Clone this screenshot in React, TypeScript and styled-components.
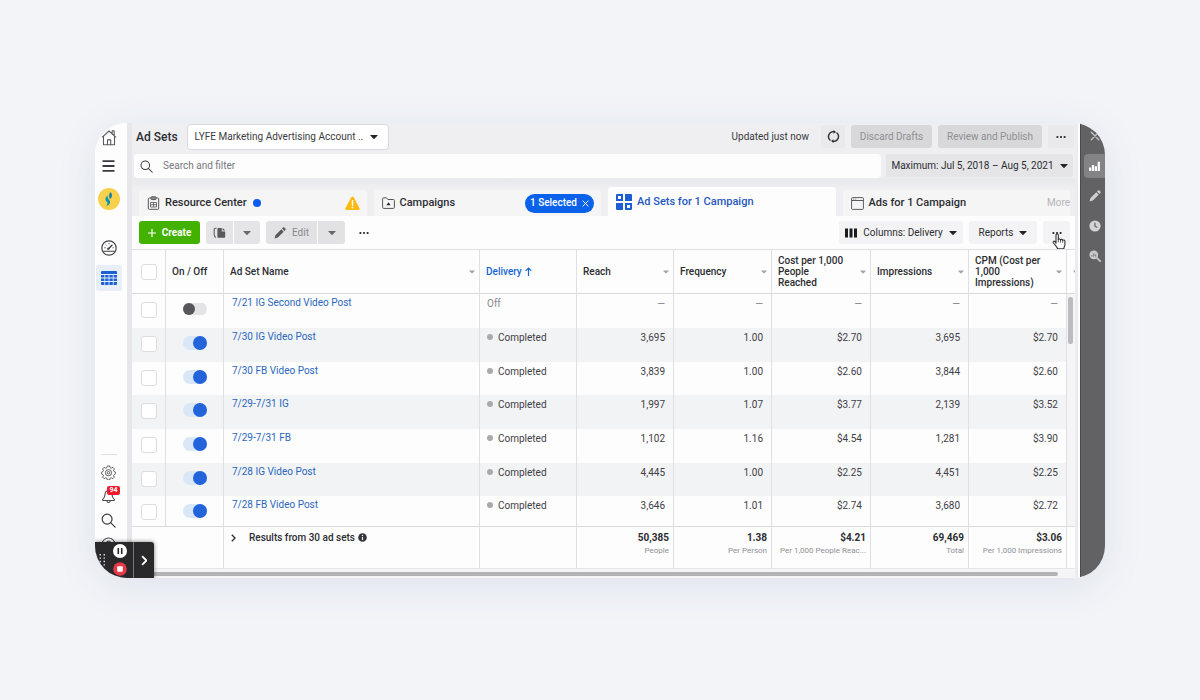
import React from 'react';
import styled, { createGlobalStyle, css } from 'styled-components';

const GlobalStyle = createGlobalStyle`
  *, *::before, *::after { box-sizing: border-box; }
  body {
    margin: 0;
    background: #f2f4f8;
    color: #2c2d31;
    font: 400 10px/12px Roboto, "Liberation Sans", sans-serif;
  }
  button, input, select { font: inherit; color: inherit; margin: 0; }
  button { border: 0; padding: 0; background: none; cursor: pointer; }
  a { text-decoration: none; color: inherit; }
`;

/* ---------- Frame ---------- */

const Page = styled.div`
  min-height: 100vh;
  padding: 123px 95px 122px;
`;

const Card = styled.div`
  position: relative;
  display: flex;
  border-radius: 32px;
  box-shadow: 0 8px 40px rgba(60, 80, 120, 0.1);
`;

const Clip = styled.div`
  display: flex;
  flex: 1;
  min-width: 0;
  position: relative;
  overflow: hidden;
  border-radius: 32px;
  background: #fdfdfe;
`;

/* ---------- Left rail ---------- */

const Rail = styled.nav`
  flex: none;
  width: 37px;
  display: flex;
  flex-direction: column;
  justify-content: space-between;
  background: #fdfdfe;
  border-right: 5px solid #e7e7eb;
`;

const RailGroup = styled.div<{ $bottom?: boolean }>`
  display: flex;
  flex-direction: column;
  align-items: center;
  padding-right: 5px;
  padding-bottom: ${(p) => (p.$bottom ? 22 : 0)}px;
`;

const RailLink = styled.a<{ $height: number; $active?: boolean }>`
  display: flex;
  align-items: center;
  justify-content: center;
  position: relative;
  width: 26px;
  height: ${(p) => p.$height}px;
  border-radius: 2px;
  background: ${(p) => (p.$active ? '#e8eff9' : 'none')};
`;

const RailGap = styled.div<{ $height: number }>`
  height: ${(p) => p.$height}px;
`;

const RailRule = styled.div`
  width: 16px;
  height: 1px;
  margin-bottom: 5px;
  background: #dedee2;
`;

const Badge = styled.span`
  position: absolute;
  top: 2px;
  right: 2px;
  padding: 0 2px;
  border-radius: 2px;
  background: #ec1c2e;
  color: #fff;
  font-size: 7px;
  font-weight: 700;
  line-height: 9px;
`;

/* ---------- Recorder widget ---------- */

const Recorder = styled.div`
  position: absolute;
  left: 0;
  bottom: 0;
  display: flex;
  width: 59px;
  height: 36px;
  border-radius: 0 3px 0 0;
  background: #29292b;
  box-shadow: 0 0 4px rgba(0, 0, 0, 0.5);
`;

const RecorderControls = styled.div`
  display: grid;
  grid-template-columns: 18px 14px;
  align-items: center;
  flex: 1;
  border-right: 1px solid #77777a;
`;

const RecorderStack = styled.div`
  display: flex;
  flex-direction: column;
  gap: 4px;
`;

const RecorderButton = styled.button`
  display: flex;
  align-items: center;
  justify-content: center;
`;

const RecorderToggle = styled(RecorderButton)`
  width: 20px;
`;

/* ---------- Main ---------- */

const Main = styled.main`
  flex: 1;
  min-width: 0;
  background: #efeef1;
`;

const TopBar = styled.header`
  display: flex;
  align-items: center;
  height: 31px;
  padding: 0 1px 4px 4px;
`;

const Title = styled.h1`
  margin: 0 9px 0 0;
  font-size: 12px;
  font-weight: 500;
  line-height: 16px;
`;

const SelectBox = styled.div`
  position: relative;
  display: flex;
  align-items: center;
`;

const AccountSelect = styled.select`
  appearance: none;
  width: 202px;
  height: 26px;
  padding: 0 20px 0 7px;
  border: 1px solid #d9d9de;
  border-radius: 4px;
  background: #fff;
  color: #3a3b40;
`;

const SelectArrow = styled.span`
  position: absolute;
  right: 11px;
  display: flex;
  pointer-events: none;
`;

const Spacer = styled.div`
  flex: 1;
`;

const Updated = styled.span`
  margin-right: 12px;
  color: #3a3b40;
`;

type Tone = 'plain' | 'faint' | 'soft' | 'grey' | 'muted' | 'disabled' | 'green';

const tones: Record<Tone, ReturnType<typeof css>> = {
  plain: css`background: none;`,
  faint: css`background: #e9e9eb;`,
  soft: css`background: #f3f3f5;`,
  grey: css`background: #e5e5e8;`,
  muted: css`background: #e2e2e4; color: #88898d;`,
  disabled: css`background: #d8d8db; color: #8f8f93;`,
  green: css`background: #43b100; color: #fff; font-weight: 700;`,
};

const Button = styled.button<{ $tone: Tone; $width?: number; $join?: 'left' | 'right' }>`
  display: flex;
  align-items: center;
  justify-content: center;
  gap: 6px;
  flex: none;
  width: ${(p) => (p.$width ? `${p.$width}px` : 'auto')};
  height: 23px;
  border-radius: ${(p) =>
    p.$join === 'left' ? '3px 0 0 3px' : p.$join === 'right' ? '0 3px 3px 0' : '3px'};
  white-space: nowrap;
  ${(p) => tones[p.$tone]}
`;

const TopActions = styled.div`
  display: flex;
  gap: 6px;
`;

const SearchRow = styled.div`
  display: flex;
  gap: 5px;
  height: 33px;
  padding: 0 2px 9px;
  background: linear-gradient(#efeef1 22px, #e8e9ec 26px, #eeeef1);
`;

const SearchBox = styled.label`
  display: flex;
  align-items: center;
  flex: 1;
  min-width: 0;
  gap: 10px;
  padding-left: 6px;
  border-radius: 4px;
  background: #fdfdfe;
`;

const SearchInput = styled.input`
  flex: 1;
  min-width: 0;
  padding: 0;
  border: 0;
  outline: 0;
  background: none;
  &::placeholder { color: #77787d; opacity: 1; }
`;

/* ---------- Tabs ---------- */

const Tabs = styled.div`
  display: grid;
  grid-template-columns: repeat(4, minmax(0, 1fr));
  gap: 7px;
  height: 29px;
  padding: 0 5px 0 7px;
  align-items: end;
`;

const Tab = styled.div<{ $active?: boolean }>`
  display: flex;
  align-items: center;
  height: ${(p) => (p.$active ? 29 : 26)}px;
  padding: 0 7px 0 8px;
  border-radius: 3px 3px 0 0;
  background: ${(p) => (p.$active ? '#fdfdfe' : '#f5f5f6')};
  color: ${(p) => (p.$active ? '#2559c0' : '#2c2d31')};
  &:last-child { padding-right: 0; }
`;

const TabLink = styled.a`
  display: flex;
  align-items: center;
  gap: 5px;
  font-size: 11px;
  font-weight: 500;
  white-space: nowrap;
`;

const Dot = styled.span`
  width: 8px;
  height: 8px;
  margin-left: 6px;
  border-radius: 50%;
  background: #0b5cf0;
`;

const Chip = styled.button`
  display: flex;
  align-items: center;
  gap: 5px;
  height: 19px;
  padding: 0 5px;
  border-radius: 10px;
  background: #0a62ea;
  color: #fff;
  font-weight: 500;
`;

const More = styled.a`
  color: #b4b4b8;
`;

/* ---------- Toolbar ---------- */

const Toolbar = styled.div`
  display: flex;
  align-items: center;
  gap: 6px;
  height: 33px;
  padding: 0 5px 0 7px;
  background: #fdfdfe;
`;

const Split = styled.div`
  display: flex;
  gap: 1px;
`;

const CursorHost = styled.div`
  position: relative;
`;

const Cursor = styled.span`
  position: absolute;
  left: 9px;
  top: 12px;
  display: flex;
`;

/* ---------- Table ---------- */

const TableWrap = styled.div`
  position: relative;
  background: #fdfdfe;
`;

const Table = styled.table`
  width: 100%;
  table-layout: fixed;
  border-spacing: 0;
  border-top: 1px solid #dfdfe3;
`;

const HeadCell = styled.th<{ $sorted?: boolean }>`
  height: 44px;
  padding: 0 4px 0 6px;
  border-right: 1px solid #e0e0e4;
  border-bottom: 1px solid #d9d9dd;
  color: ${(p) => (p.$sorted ? '#1565d8' : '#2c2d31')};
  font-weight: 500;
  line-height: 11px;
  text-align: left;
  white-space: pre;
  overflow: hidden;
  &:last-child { padding: 0 0 0 6px; border-right: 0; }
`;

const HeadInner = styled.div`
  display: flex;
  align-items: center;
  justify-content: space-between;
`;

const SortLabel = styled.div`
  display: flex;
  align-items: center;
  gap: 3px;
`;

const Row = styled.tr`
  height: 34px;
  &:nth-child(3n) { height: 33px; }
  &:last-child { height: 30px; }
  &:nth-child(even) { background: #f2f3f5; }
`;

const Cell = styled.td<{ $numeric?: boolean; $muted?: boolean }>`
  padding: 4px 8px 0 7px;
  border-right: 1px solid #e0e0e4;
  color: ${(p) => (p.$muted ? '#85868a' : '#3f4045')};
  text-align: ${(p) => (p.$numeric ? 'right' : 'left')};
  vertical-align: top;
  white-space: nowrap;
  &:last-child { border-right: 0; background: #f5f5f7; }
`;

const NameCell = styled(Cell)`
  padding: 3px 8px 0;
`;

const CheckCell = styled(Cell)`
  padding: 8px 0 0 9px;
`;

const ToggleCell = styled(Cell)`
  padding: 8px 0 0 17px;
`;

const AdLink = styled.a`
  color: #2a66bd;
`;

const StatusDot = styled.span`
  display: inline-block;
  width: 6px;
  height: 6px;
  margin: 0 5px 1px 0;
  border-radius: 50%;
  background: #a9aaae;
`;

const Check = styled.input`
  appearance: none;
  display: block;
  width: 16px;
  height: 16px;
  border: 1px solid #dcdce1;
  border-radius: 3px;
  background: #fff;
`;

const HeadCheckCell = styled(HeadCell)`
  padding: 0 0 0 9px;
`;

const Toggle = styled.input`
  appearance: none;
  display: flex;
  align-items: center;
  width: 24px;
  height: 14px;
  border-radius: 7px;
  background: linear-gradient(transparent 1px, #e4e4e7 1px, #e4e4e7 13px, transparent 13px);
  &::before {
    content: "";
    width: 12px;
    height: 12px;
    border-radius: 50%;
    background: #56575b;
  }
  &:checked {
    background: #d8e8f6;
    justify-content: flex-end;
  }
  &:checked::before {
    width: 14px;
    height: 14px;
    background: #2464da;
  }
`;

const FootCell = styled.td`
  height: 43px;
  padding: 4px 4px 0 6px;
  border-top: 1px solid #d9d9dd;
  border-right: 1px solid #e0e0e4;
  border-bottom: 1px solid #e6e6ea;
  line-height: 13px;
  text-align: right;
  vertical-align: top;
  &:first-child, &:last-child { border-right: 0; }
`;

const FootButton = styled.button`
  display: flex;
  align-items: center;
  font-weight: 500;
  line-height: 13px;
`;

const Chevron = styled.span`
  display: flex;
  width: 19px;
  padding-left: 1px;
`;

const InfoMark = styled.span`
  display: flex;
  margin-left: 3px;
`;

const Total = styled.div`
  font-weight: 700;
`;

const Caption = styled.div`
  color: #8f9094;
  font-size: 8px;
  white-space: nowrap;
`;

const VerticalThumb = styled.div`
  position: absolute;
  top: 48px;
  right: 2px;
  width: 5px;
  height: 47px;
  border-radius: 2px;
  background: #bcbcc0;
`;

const HorizontalTrack = styled.div`
  height: 9px;
  padding: 3px 17px 0 0;
  background: #f5f5f7;
`;

const HorizontalThumb = styled.div`
  height: 4px;
  border-radius: 2px;
  background: #b3b3b6;
`;

/* ---------- Right panel ---------- */

const Edge = styled.div`
  flex: none;
  width: 5px;
  background: #ececef;
  border-right: 2px solid #fdfdfe;
`;

const SidePanel = styled.aside`
  flex: none;
  display: flex;
  flex-direction: column;
  gap: 6px;
  width: 25px;
  padding: 1px 0 0 3px;
  border-left: 1px solid #4a494c;
  background: #626164;
`;

const SideButton = styled.button<{ $active?: boolean }>`
  display: flex;
  align-items: center;
  justify-content: center;
  height: 24px;
  border-radius: 4px 0 0 4px;
  background: ${(p) => (p.$active ? '#838285' : 'none')};
`;

/* ---------- Icons ---------- */

const Arrow = ({ size = 8, color = '#222326' }: { size?: number; color?: string }) => (
  <svg width={size} height={size} viewBox="0 0 8 8" aria-hidden="true">
    <path d="M.6 2h6.8q.6 0 .2.5L4.5 5.8q-.5.5-1 0L.4 2.5Q0 2 .6 2Z" fill={color} />
  </svg>
);

const SortArrow = () => (
  <svg width="7" height="9" viewBox="0 0 7 9" fill="none" stroke="#1565d8" strokeWidth="1.2" aria-hidden="true">
    <path d="M3.500 9V1.200M.7 3.900l2.800-2.800 2.800 2.800" />
  </svg>
);

const Dots = () => (
  <svg width="10" height="4" viewBox="0 0 10 4" aria-hidden="true">
    <circle cx="1.4" cy="2" r="1.1" fill="#222326" />
    <circle cx="5" cy="2" r="1.1" fill="#222326" />
    <circle cx="8.6" cy="2" r="1.1" fill="#222326" />
  </svg>
);

const Magnifier = ({ size, color = '#3a3b40' }: { size: number; color?: string }) => (
  <svg width={size} height={size} viewBox="0 0 14 14" fill="none" stroke={color} strokeWidth="1.1" strokeLinecap="round" aria-hidden="true">
    <circle cx="5.7" cy="5.7" r="4.6" />
    <path d="m9.2 9.2 4 4" />
  </svg>
);

const HomeIcon = () => (
  <svg width="16" height="17" viewBox="0 0 16 17" fill="none" stroke="#5a5b5f" strokeWidth="1.1" strokeLinejoin="round" aria-hidden="true">
    <path d="M1 8.400 8 2l7 6.400M2.500 7.200v8.600h11V7.200M6.500 15.600v-4.700h3.200v4.700M11.200 4.800V1.700h2v5" />
  </svg>
);

const MenuIcon = () => (
  <svg width="13" height="12" viewBox="0 0 13 12" stroke="#3a3b40" strokeWidth="1.8" aria-hidden="true">
    <path d="M.5 1.2h12M.5 6h12M.5 10.8h12" />
  </svg>
);

const AvatarIcon = () => (
  <svg width="22" height="22" viewBox="0 0 22 22" aria-hidden="true">
    <circle cx="11" cy="11" r="11" fill="#f8d04c" />
    <path d="M12.4 4c2.400 2.400 1.800 5-.4 7.200-1.200-1.800-1.400-4.400.4-7.200Z" fill="#0a7fa6" />
    <path d="M9.500 7.200c-2.600 2.800-2.600 5.200-.3 6.800.6 1.400 0 2.600-1 3.800 3-.6 5-3 3.400-5.400C10.300 10.800 9.300 9.400 9.500 7.200Z" fill="#0b93b8" />
  </svg>
);

const GaugeIcon = () => (
  <svg width="16" height="16" viewBox="0 0 16 16" fill="none" stroke="#3f4045" strokeLinecap="round" aria-hidden="true">
    <circle cx="8" cy="8" r="7.200" strokeWidth="1.200" />
    <path d="M2.500 11.300h11" strokeWidth="1.100" />
    <path d="m7.400 8.700 3.600-3.500" strokeWidth="1.500" />
    <path d="M3.600 7.800h.6M5 4.800l.3.300M8 3.400v.4M12 7.800h.4" strokeWidth=".9" />
    <circle cx="7.200" cy="8.800" r=".8" strokeWidth=".9" />
  </svg>
);

const GridTableIcon = () => (
  <svg width="16" height="14" viewBox="0 0 16 14" fill="#1c62d6" aria-hidden="true">
    <path d="M1 0h14q1 0 1 1v2H0V1Q0 0 1 0ZM0 4h3.400v2.600H0ZM4.200 4h3.400v2.600H4.200ZM8.400 4h3.400v2.600H8.400ZM12.600 4H16v2.600h-3.400ZM0 7.500h3.400v2.600H0ZM4.200 7.500h3.400v2.600H4.200ZM8.400 7.500h3.400v2.600H8.400ZM12.600 7.500H16v2.600h-3.400ZM0 11h3.400v3H1q-1 0-1-1ZM4.200 11h3.400v3H4.200ZM8.400 11h3.400v3H8.400ZM12.600 11H16v2q0 1-1 1h-2.400Z" />
  </svg>
);

const GearIcon = () => (
  <svg width="15" height="15" viewBox="0 0 16 16" fill="none" stroke="#55565a" strokeWidth="1" strokeLinejoin="round" aria-hidden="true">
    <path d="M6.800 1h2.400l.5 1.800 1.300.6 1.700-.9 1.600 1.700-.9 1.700.6 1.200 1.600.6v1.600l-1.600.8-.6 1.300.9 1.500-1.600 1.600-1.700-.8-1.300.5-.5 1.800H6.800l-.5-1.800-1.300-.5-1.700.8-1.600-1.600.9-1.500L2 10.100l-1.600-.8V7.700L2 7.100l.6-1.200-.9-1.700 1.600-1.700 1.700.9 1.300-.6Z" />
    <circle cx="8" cy="8.200" r="3.300" />
    <circle cx="8" cy="8.200" r="1.300" />
  </svg>
);

const BellIcon = () => (
  <svg width="15" height="15" viewBox="0 0 15 15" fill="none" stroke="#4b4c50" strokeWidth="1.100" strokeLinejoin="round" aria-hidden="true">
    <path d="M7.500 1.800c-2.300 0-3.400 1.600-3.500 3.800-.1 2.600-.8 3.500-2.200 4.700-.6.600-.4 1.200.4 1.200h10.600c.8 0 1-.6.400-1.200C11.800 9.100 11.100 8.200 11 5.600c-.1-2.200-1.200-3.800-3.500-3.800ZM5.800 11.700c.1 2.300 3.300 2.300 3.400 0" />
  </svg>
);

const HelpIcon = () => (
  <svg width="15" height="15" viewBox="0 0 15 15" fill="none" stroke="#55565a" strokeWidth="1.100" aria-hidden="true">
    <circle cx="7.500" cy="7.500" r="6.500" />
    <path d="M5.600 5.800c.2-2.300 3.800-2.200 3.800 0 0 1.300-1.900 1.500-1.900 3" />
  </svg>
);

const RefreshIcon = () => (
  <svg width="13" height="13" viewBox="0 0 13 13" fill="none" stroke="#303135" strokeWidth="1.400" aria-hidden="true">
    <path d="M3.500 10.500A4.900 4.900 0 0 1 7 1.700M9.500 2.500A4.900 4.900 0 0 1 6 11.300" />
    <path d="M6.400 0 9 1.900 6.600 3.800ZM6.600 13 4 11.100l2.400-1.900Z" fill="#303135" stroke="none" />
  </svg>
);

const ClipboardIcon = () => (
  <svg width="13" height="14" viewBox="0 0 13 14" fill="none" stroke="#55565a" strokeWidth="1" aria-hidden="true">
    <path d="M4 2H2.300q-1 0-1 1v9.300q0 1 1 1h8.400q1 0 1-1V3q0-1-1-1H9" />
    <rect x="4" y=".8" width="5" height="2.800" rx=".8" fill="#8d8e92" />
    <path d="M3.500 6.500h6v4.500h-6ZM3.500 8.700h6M6.500 6.500V11" strokeWidth=".8" />
  </svg>
);

const WarningIcon = () => (
  <svg width="15" height="15" viewBox="0 0 15 15" aria-hidden="true">
    <path d="M6.300 1.200q1.200-1.600 2.400 0l5.900 11q.7 1.800-1.200 1.800H1.600q-1.900 0-1.200-1.800Z" fill="#fdb913" />
    <path d="M7.500 4.800v4.400" stroke="#fff" strokeWidth="1.500" strokeLinecap="round" />
    <circle cx="7.500" cy="11.600" r=".9" fill="#fff" />
  </svg>
);

const FolderIcon = () => (
  <svg width="13" height="12" viewBox="0 0 13 12" fill="none" stroke="#55565a" strokeWidth="1" strokeLinejoin="round" aria-hidden="true">
    <path d="M.6 10.400V1.600Q.6.800 1.400.8h3l1.400 1.700h5.600q1 0 1 1v6.900q0 1-1 1H1.600q-1 0-1-1Z" />
    <path d="m6.500 5.300 2 3h-4Z" fill="#222326" stroke="none" />
  </svg>
);

const AdSetsIcon = () => (
  <svg width="16" height="16" viewBox="0 0 16 16" fill="#1c5fd4" aria-hidden="true">
    <path fillRule="evenodd" d="M1 0h6v7H0V1q0-1 1-1Zm1 2v3h3V2ZM9 9h7v6q0 1-1 1H9Zm2 2v3h3v-3Z" />
    <path d="M9 0h6q1 0 1 1v6H9ZM0 9h7v7H1q-1 0-1-1Z" />
  </svg>
);

const WindowIcon = () => (
  <svg width="13" height="13" viewBox="0 0 13 13" fill="none" stroke="#5c5d61" strokeWidth="1" aria-hidden="true">
    <rect x=".6" y=".6" width="11.800" height="11.800" rx="1" />
    <path d="M.6 3.500h11.800" />
    <path d="M2 2.100h1M4.200 2.100h1" strokeWidth=".8" />
  </svg>
);

const CloseIcon = ({ size, color }: { size: number; color: string }) => (
  <svg width={size} height={size} viewBox="0 0 8 8" stroke={color} strokeWidth="1.100" strokeLinecap="round" aria-hidden="true">
    <path d="m1 1 6 6M7 1 1 7" />
  </svg>
);

const PlusIcon = () => (
  <svg width="8" height="8" viewBox="0 0 8 8" stroke="#fff" strokeWidth="1.200" aria-hidden="true">
    <path d="M4 0v8M0 4h8" />
  </svg>
);

const DuplicateIcon = () => (
  <svg width="13" height="12" viewBox="0 0 13 12" aria-hidden="true">
    <path d="M3.600 1Q1.200 1 1.200 3v4.500q0 2 1.800 3" fill="none" stroke="#6b6c70" strokeWidth="1.200" />
    <path d="M5.400 1h3.400v3.400h3.400v5.400q0 1-1 1H5.400q-1 0-1-1V2q0-1 1-1Z" fill="#58595d" />
    <path d="m9.600.9 2.700 2.700H9.600Z" fill="#58595d" />
  </svg>
);

const PencilIcon = ({ color }: { color: string }) => (
  <svg width="12" height="12" viewBox="0 0 12 12" fill={color} aria-hidden="true">
    <path d="m.6 11.400.8-3.200L7.300 2.300l2.400 2.400-5.900 5.900ZM8 1.600 9 .6q.7-.6 1.400 0l1 1q.6.700 0 1.400l-1 1Z" />
  </svg>
);

const ColumnsIcon = () => (
  <svg width="12" height="10" viewBox="0 0 12 10" fill="#1b1c1f" aria-hidden="true">
    <path d="M0 .5h3v9H0ZM4.500.5h3v9h-3ZM9 .5h3v9H9Z" />
  </svg>
);

const HandIcon = () => (
  <svg width="15" height="17" viewBox="0 0 15 17" fill="#fff" stroke="#333437" strokeWidth="1.100" strokeLinejoin="round" aria-hidden="true">
    <path d="M4 10.200V2.100c0-1.700 2.300-1.700 2.300 0v4.500c.3-1 2.100-.9 2.200.3.500-.9 2.100-.6 2.200.5.600-.8 2.100-.5 2.200.8v3.600c0 1.500-.9 2-1.100 4.100H5.600C5.200 13.600 2.700 11.900 1.300 9.800c-.7-1.300.7-2.200 1.700-1.100Z" />
    <path d="M6.300 6.600v2.800M8.500 7v2.600M10.700 7.500v2.300" fill="none" strokeWidth=".8" />
  </svg>
);

const InfoIcon = () => (
  <svg width="9" height="9" viewBox="0 0 9 9" aria-hidden="true">
    <circle cx="4.500" cy="4.500" r="4.300" fill="#35363a" />
    <path d="M4.500 4v2.800" stroke="#fff" strokeWidth="1.200" />
    <circle cx="4.500" cy="2.500" r=".7" fill="#fff" />
  </svg>
);

const ChevronIcon = ({ color, size, weight }: { color: string; size: number; weight: number }) => (
  <svg width={size * 0.625} height={size} viewBox="0 0 5 8" fill="none" stroke={color} strokeWidth={weight} aria-hidden="true">
    <path d="m.8.800 3.200 3.200-3.200 3.200" />
  </svg>
);

const BarsIcon = () => (
  <svg width="11" height="11" viewBox="0 0 11 11" fill="#fff" aria-hidden="true">
    <path d="M0 6.500h2.200V10H0ZM2.900 4h2.200v6H2.900ZM5.800 5.300H8V10H5.800ZM8.700.8h2.200V10H8.700Z" />
  </svg>
);

const ClockIcon = () => (
  <svg width="12" height="12" viewBox="0 0 12 12" aria-hidden="true">
    <circle cx="6" cy="6" r="5.600" fill="#d3d2d5" />
    <path d="M6 2.800v3.400l2.300 1.300" fill="none" stroke="#626164" strokeWidth="1.200" />
  </svg>
);

const ZoomIcon = () => (
  <svg width="12" height="12" viewBox="0 0 12 12" aria-hidden="true">
    <circle cx="4.800" cy="4.800" r="4.400" fill="#c9c8cb" />
    <path d="m7.800 7.800 3.400 3.400" stroke="#c9c8cb" strokeWidth="1.700" strokeLinecap="round" />
    <path d="M2.900 6.600V5M4.800 6.600V3.400M6.700 6.600V4.400" stroke="#77767a" strokeWidth="1" />
  </svg>
);

const GripIcon = () => (
  <svg width="14" height="14" viewBox="0 0 14 14" fill="#d5d5d7" aria-hidden="true">
    <path d="M4.500 1H6v1.400H4.500ZM8.500 1H10v1.400H8.500ZM4.500 4.400H6v1.400H4.500ZM8.500 4.400H10v1.400H8.500ZM4.500 7.800H6v1.400H4.500ZM8.500 7.800H10v1.400H8.500ZM4.500 11.200H6v1.400H4.500ZM8.500 11.200H10v1.400H8.500Z" />
  </svg>
);

const PauseIcon = () => (
  <svg width="14" height="14" viewBox="0 0 14 14" aria-hidden="true">
    <circle cx="7" cy="7" r="7" fill="#fff" />
    <path d="M5.300 4v6M8.700 4v6" stroke="#29292b" strokeWidth="1.600" />
  </svg>
);

const StopIcon = () => (
  <svg width="14" height="14" viewBox="0 0 14 14" aria-hidden="true">
    <circle cx="7" cy="7" r="6.800" fill="#e5394a" />
    <rect x="4.200" y="4.200" width="5.600" height="5.600" rx="1" fill="#fff" />
  </svg>
);

/* ---------- Data ---------- */

const columnWidths = [34, 58, undefined, 97, 97, 98, 99, 98, 98, 8];

type AdSet = { name: string; on: boolean; values: string[] };

const adSets: AdSet[] = [
  { name: '7/21 IG Second Video Post', on: false, values: ['—', '—', '—', '—', '—'] },
  { name: '7/30 IG Video Post', on: true, values: ['3,695', '1.00', '$2.70', '3,695', '$2.70'] },
  { name: '7/30 FB Video Post', on: true, values: ['3,839', '1.00', '$2.60', '3,844', '$2.60'] },
  { name: '7/29-7/31 IG', on: true, values: ['1,997', '1.07', '$3.77', '2,139', '$3.52'] },
  { name: '7/29-7/31 FB', on: true, values: ['1,102', '1.16', '$4.54', '1,281', '$3.90'] },
  { name: '7/28 IG Video Post', on: true, values: ['4,445', '1.00', '$2.25', '4,451', '$2.25'] },
  { name: '7/28 FB Video Post', on: true, values: ['3,646', '1.01', '$2.74', '3,680', '$2.72'] },
];

const metrics = [
  'Reach',
  'Frequency',
  'Cost per 1,000\nPeople\nReached',
  'Impressions',
  'CPM (Cost per\n1,000\nImpressions)',
];

const totals = [
  ['50,385', 'People'],
  ['1.38', 'Per Person'],
  ['$4.21', 'Per 1,000 People Reac...'],
  ['69,469', 'Total'],
  ['$3.06', 'Per 1,000 Impressions'],
];

/* ---------- Sections ---------- */

const LeftRail = () => (
  <Rail aria-label="Main">
    <RailGroup>
      <RailLink href="#home" aria-label="Home" $height={29}><HomeIcon /></RailLink>
      <RailLink href="#menu" aria-label="All tools" $height={28}><MenuIcon /></RailLink>
      <RailLink href="#account" aria-label="Business account" $height={38}><AvatarIcon /></RailLink>
      <RailGap $height={18} />
      <RailLink href="#overview" aria-label="Account overview" $height={24}><GaugeIcon /></RailLink>
      <RailGap $height={5} />
      <RailLink href="#manage" aria-label="Ads Manager" $height={26} $active><GridTableIcon /></RailLink>
    </RailGroup>
    <RailGroup $bottom>
      <RailRule />
      <RailLink href="#settings" aria-label="Settings" $height={24}><GearIcon /></RailLink>
      <RailLink href="#notifications" aria-label="Notifications" $height={24}>
        <BellIcon />
        <Badge>94</Badge>
      </RailLink>
      <RailLink href="#search" aria-label="Search" $height={24}><Magnifier size={15} /></RailLink>
      <RailLink href="#help" aria-label="Help" $height={24}><HelpIcon /></RailLink>
    </RailGroup>
  </Rail>
);

const DataTable = () => (
  <TableWrap>
    <Table>
      <colgroup>
        {columnWidths.map((w, i) => <col key={i} width={w} />)}
      </colgroup>
      <thead>
        <tr>
          <HeadCheckCell><Check type="checkbox" aria-label="Select all ad sets" /></HeadCheckCell>
          <HeadCell>On / Off</HeadCell>
          <HeadCell>
            <HeadInner>Ad Set Name<Arrow size={6} color="#a3a4a8" /></HeadInner>
          </HeadCell>
          <HeadCell $sorted aria-sort="ascending"><SortLabel>Delivery<SortArrow /></SortLabel></HeadCell>
          {metrics.map((m) => (
            <HeadCell key={m}>
              <HeadInner>{m}<Arrow size={6} color="#a3a4a8" /></HeadInner>
            </HeadCell>
          ))}
          <HeadCell><Arrow size={6} color="#a3a4a8" /></HeadCell>
        </tr>
      </thead>
      <tbody>
        {adSets.map((ad) => (
          <Row key={ad.name}>
            <CheckCell><Check type="checkbox" aria-label={`Select ${ad.name}`} /></CheckCell>
            <ToggleCell>
              <Toggle type="checkbox" role="switch" defaultChecked={ad.on} aria-label={`Turn ${ad.name} on or off`} />
            </ToggleCell>
            <NameCell><AdLink href="#ad-set">{ad.name}</AdLink></NameCell>
            <Cell $muted={!ad.on}>{ad.on ? <><StatusDot />Completed</> : 'Off'}</Cell>
            {ad.values.map((v, i) => <Cell key={i} $numeric $muted={!ad.on}>{v}</Cell>)}
            <Cell />
          </Row>
        ))}
      </tbody>
      <tfoot>
        <tr>
          <FootCell />
          <FootCell />
          <FootCell>
            <FootButton type="button">
              <Chevron><ChevronIcon color="#2c2d31" size={8} weight={1.3} /></Chevron>
              Results from 30 ad sets
              <InfoMark><InfoIcon /></InfoMark>
            </FootButton>
          </FootCell>
          <FootCell />
          {totals.map(([value, caption]) => (
            <FootCell key={caption}>
              <Total>{value}</Total>
              <Caption>{caption}</Caption>
            </FootCell>
          ))}
          <FootCell />
        </tr>
      </tfoot>
    </Table>
    <VerticalThumb />
    <HorizontalTrack><HorizontalThumb /></HorizontalTrack>
  </TableWrap>
);

export default function App() {
  return (
    <Page>
      <GlobalStyle />
      <Card>
        <Clip>
          <LeftRail />
          <Main>
            <TopBar>
              <Title>Ad Sets</Title>
              <SelectBox>
                <AccountSelect aria-label="Ad account">
                  <option>LYFE Marketing Advertising Account ..</option>
                </AccountSelect>
                <SelectArrow><Arrow /></SelectArrow>
              </SelectBox>
              <Spacer />
              <Updated>Updated just now</Updated>
              <TopActions>
                <Button type="button" $tone="faint" $width={24} aria-label="Refresh"><RefreshIcon /></Button>
                <Button type="button" $tone="disabled" $width={81}>Discard Drafts</Button>
                <Button type="button" $tone="disabled" $width={104}>Review and Publish</Button>
                <Button type="button" $tone="faint" $width={26} aria-label="More options"><Dots /></Button>
              </TopActions>
            </TopBar>
            <SearchRow>
              <SearchBox>
                <Magnifier size={13} />
                <SearchInput placeholder="Search and filter" aria-label="Search and filter" />
              </SearchBox>
              <Button type="button" $tone="grey" $width={187}>
                Maximum: Jul 5, 2018 – Aug 5, 2021
                <Arrow />
              </Button>
            </SearchRow>
            <Tabs>
              <Tab>
                <TabLink href="#resources"><ClipboardIcon />Resource Center</TabLink>
                <Dot />
                <Spacer />
                <WarningIcon />
              </Tab>
              <Tab>
                <TabLink href="#campaigns"><FolderIcon />Campaigns</TabLink>
                <Spacer />
                <Chip type="button">1 Selected<CloseIcon size={7} color="#fff" /></Chip>
              </Tab>
              <Tab $active>
                <TabLink href="#ad-sets" aria-current="page"><AdSetsIcon />Ad Sets for 1 Campaign</TabLink>
              </Tab>
              <Tab>
                <TabLink href="#ads"><WindowIcon />Ads for 1 Campaign</TabLink>
                <Spacer />
                <More href="#more">More</More>
              </Tab>
            </Tabs>
            <Toolbar>
              <Button type="button" $tone="green" $width={61}><PlusIcon />Create</Button>
              <Split>
                <Button type="button" $tone="grey" $width={27} $join="left" aria-label="Duplicate"><DuplicateIcon /></Button>
                <Button type="button" $tone="grey" $width={26} $join="right" aria-label="Duplicate options"><Arrow color="#68696d" /></Button>
              </Split>
              <Split>
                <Button type="button" $tone="muted" $width={51} $join="left"><PencilIcon color="#58595d" />Edit</Button>
                <Button type="button" $tone="muted" $width={27} $join="right" aria-label="Edit options"><Arrow color="#68696d" /></Button>
              </Split>
              <Button type="button" $tone="plain" $width={26} aria-label="More actions"><Dots /></Button>
              <Spacer />
              <Button type="button" $tone="soft" $width={124}><ColumnsIcon />Columns: Delivery<Arrow /></Button>
              <Button type="button" $tone="soft" $width={68}>Reports<Arrow /></Button>
              <CursorHost>
                <Button type="button" $tone="soft" $width={27} aria-label="More reports options"><Dots /></Button>
                <Cursor><HandIcon /></Cursor>
              </CursorHost>
            </Toolbar>
            <DataTable />
          </Main>
          <Edge />
          <SidePanel>
            <SideButton type="button" aria-label="Close"><CloseIcon size={10} color="#c4c3c6" /></SideButton>
            <SideButton type="button" aria-label="Charts" $active><BarsIcon /></SideButton>
            <SideButton type="button" aria-label="Edit"><PencilIcon color="#cfced1" /></SideButton>
            <SideButton type="button" aria-label="History"><ClockIcon /></SideButton>
            <SideButton type="button" aria-label="Inspect"><ZoomIcon /></SideButton>
          </SidePanel>
          <Recorder>
            <RecorderControls>
              <GripIcon />
              <RecorderStack>
                <RecorderButton type="button" aria-label="Pause recording"><PauseIcon /></RecorderButton>
                <RecorderButton type="button" aria-label="Stop recording"><StopIcon /></RecorderButton>
              </RecorderStack>
            </RecorderControls>
            <RecorderToggle type="button" aria-label="Collapse recorder">
              <ChevronIcon color="#fff" size={11} weight={1.4} />
            </RecorderToggle>
          </Recorder>
        </Clip>
      </Card>
    </Page>
  );
}
